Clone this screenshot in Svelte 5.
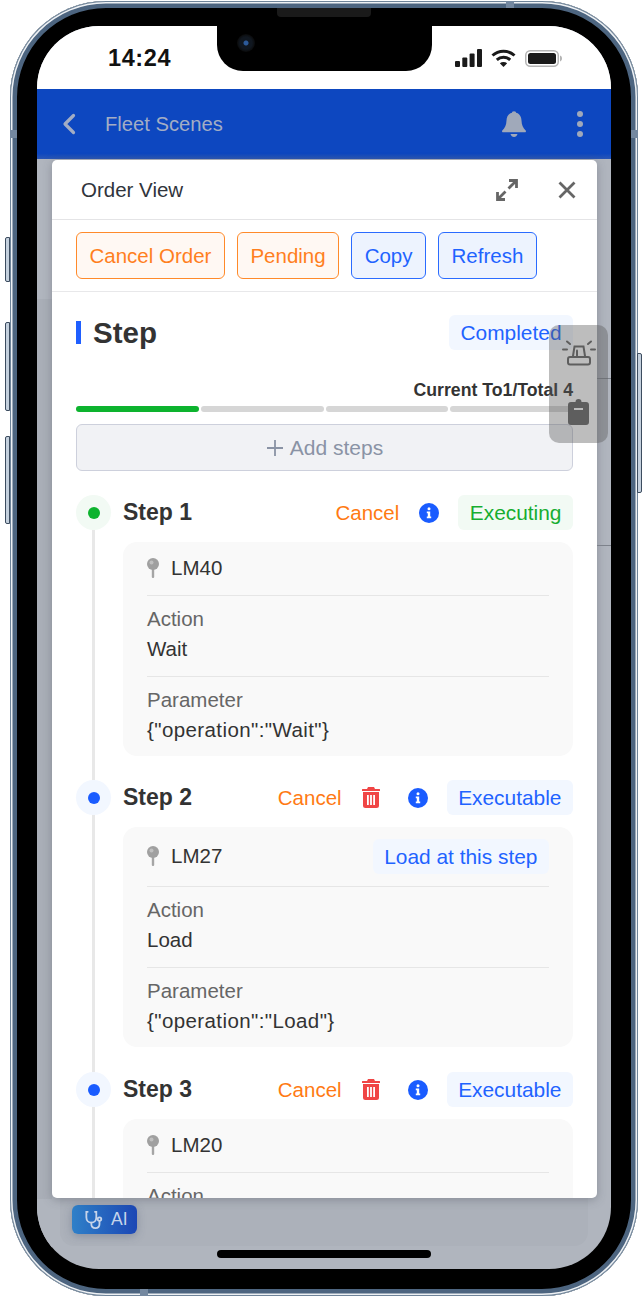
<script>
	const bars = [true, false, false, false];
	// the third step runs past the bottom of the sheet, only its first label shows
	const steps = [
		{ name: "Step 1", active: true, status: "Executing", point: "LM40", action: "Wait", param: '{"operation":"Wait"}' },
		{ name: "Step 2", status: "Executable", trash: true, point: "LM27", load: true, action: "Load", param: '{"operation":"Load"}' },
		{ name: "Step 3", status: "Executable", trash: true, point: "LM20" }
	];
	const marks = ["m-left", "m-right", "m-top", "m-bottom"];
</script>

<div class="phone">
	<span class="side vol-mute"></span>
	<span class="side vol-up"></span>
	<span class="side vol-down"></span>
	<span class="side power"></span>
	{#each marks as m}
		<span class="mark {m}"></span>
	{/each}
	<span class="speaker"></span>

	<div class="screen">
		<div class="notch"><span class="camera"></span></div>

		<div class="status">
			<span class="time">14:24</span>
			<div class="status-icons">
				<svg width="27" height="18" viewBox="0 0 27 18" fill="#1a1a1a">
					<rect x="0" y="12" width="5" height="6" rx="1" />
					<rect x="7.3" y="8.5" width="5" height="9.5" rx="1" />
					<rect x="14.6" y="4.5" width="5" height="13.5" rx="1" />
					<rect x="22" y="0" width="5" height="18" rx="1" />
				</svg>
				<svg width="25" height="18" viewBox="0 0 25 18" fill="none" stroke="#1a1a1a" stroke-width="3">
					<path d="M1.5 6.5C7.6 .8 17.4 .8 23.500 6.500" />
					<path d="M5.800 10.800C9.600 7.400 15.400 7.400 19.200 10.800" />
					<path d="M12.500 18L8.800 14.200C10.900 12.500 14.100 12.500 16.200 14.200Z" fill="#1a1a1a" stroke="none" />
				</svg>
				<svg width="37" height="17" viewBox="0 0 37 17">
					<rect x=".75" y=".75" width="32.500" height="15.500" rx="4.500" fill="none" stroke="#b4b4b4" stroke-width="1.500" />
					<rect x="3" y="3" width="28" height="11" rx="2.500" fill="#1a1a1a" />
					<path d="M35 5.500c1.300.4 2 1.600 2 3s-.7 2.600-2 3z" fill="#b4b4b4" />
				</svg>
			</div>
		</div>

		<header class="appbar">
			<svg class="back" width="16" height="22" viewBox="0 0 16 22" fill="none" stroke="#a3adc4" stroke-width="3.200" stroke-linecap="round" stroke-linejoin="round">
				<path d="M12.500 2.500L4 11l8.500 8.500" />
			</svg>
			<span class="appbar-title">Fleet Scenes</span>
			<svg class="bell" width="24" height="27" viewBox="0 0 24 27" fill="#a0a9ba">
				<circle cx="12" cy="2.500" r="2.300" />
				<path d="M12 1.500c-4.800 0-7.300 3.500-7.500 8-.2 4.600-1.500 7.400-4.200 10 -.6.700-.2 1.700.7 1.700h22c.9 0 1.300-1 .7-1.700-2.700-2.600-4-5.400-4.200-10-.2-4.500-2.700-8-7.500-8z" />
				<path d="M8.500 23h7c-.5 1.800-1.900 3-3.500 3s-3-1.200-3.500-3z" />
			</svg>
			<div class="dots"><i></i><i></i><i></i></div>
		</header>

		<div class="backdrop">
			<section class="sheet">
				<div class="sheet-head">
					<span>Order View</span>
					<svg class="expand" width="22" height="22" viewBox="0 0 22 22" fill="none" stroke="#666" stroke-width="2.800">
						<path d="M12.500 9.500L20 2M13 1.500h7.500V9" />
						<path d="M9.500 12.500L2 20M1.500 13v7.500H9" />
					</svg>
					<svg class="close" width="18" height="18" viewBox="0 0 18 18" fill="none" stroke="#666" stroke-width="2.800">
						<path d="M1.500 1.500l15 15M16.500 1.500l-15 15" />
					</svg>
				</div>

				<div class="actions">
					<button class="btn warn">Cancel Order</button>
					<button class="btn warn">Pending</button>
					<button class="btn info">Copy</button>
					<button class="btn info">Refresh</button>
				</div>

				<div class="body">
					<div class="title-row">
						<h2>Step</h2>
						<span class="tag">Completed</span>
					</div>
					<p class="progress-label">Current To1/Total 4</p>
					<div class="progress">
						{#each bars as done}
							<span class:done></span>
						{/each}
					</div>
					<button class="add">
						<svg width="18" height="18" viewBox="0 0 18 18" stroke="#8a93a5" stroke-width="1.800"><path d="M9 1v16M1 9h16" /></svg>
						Add steps
					</button>

					{#each steps as step}
						<div class="step">
							<div class="rail">
								<span class="node" class:active={step.active}><i></i></span>
								<span class="line"></span>
							</div>
							<div class="main">
								<div class="step-head">
									<h3>{step.name}</h3>
									<span class="cancel">Cancel</span>
									{#if step.trash}
										<svg class="trash" width="18" height="21" viewBox="0 0 18 21" fill="#f04545">
											<path d="M6 0h6l1 2h4.500a.5.5 0 0 1 .5.5V4H0V2.500A.5.5 0 0 1 .5 2H5z" />
											<path fill-rule="evenodd" d="M1 5h16v13.500a2.500 2.500 0 0 1-2.500 2.500h-11A2.500 2.500 0 0 1 1 18.500zM5 8v10h1.800V8zm3.100 0v10h1.800V8zm3.100 0v10H13V8z" />
										</svg>
									{/if}
									<svg class="info-icon" width="20" height="20" viewBox="0 0 20 20">
										<circle cx="10" cy="10" r="10" fill="#1a5cff" />
										<circle cx="10" cy="5.800" r="1.500" fill="#fff" />
										<path d="M7.800 8.500h3.400v5h1v1.700H7.800v-1.700h1v-3.300h-1z" fill="#fff" />
									</svg>
									<span class="tag" class:green={step.active}>{step.status}</span>
								</div>

								<div class="card" class:tall={step.load}>
									<div class="point">
										<svg width="12" height="20" viewBox="0 0 12 20">
											<rect x="4.800" y="9" width="2.400" height="11" rx="1" fill="#a5a5a5" />
											<circle cx="6" cy="6" r="6" fill="#a0a0a0" />
											<circle cx="4.500" cy="4.500" r="2" fill="#c0c0c0" />
										</svg>
										<span>{step.point}</span>
										{#if step.load}
											<span class="tag load">Load at this step</span>
										{/if}
									</div>
									<div class="field">
										<span class="label">Action</span>
										{#if step.action}<div>{step.action}</div>{/if}
									</div>
									{#if step.param}
										<div class="field">
											<span class="label">Parameter</span>
											<div class="param">{step.param}</div>
										</div>
									{/if}
								</div>
							</div>
						</div>
					{/each}
				</div>
			</section>

			<div class="under">
				<button class="ai">
					<svg width="19" height="20" viewBox="0 0 21 21" fill="none" stroke="#c6d4ea" stroke-width="2" stroke-linecap="round">
						<path d="M3 1.500H1.500v6c0 3.500 2.400 6 5.500 6s5.500-2.500 5.500-6v-6H11" />
						<path d="M7 13.500v1.500c0 2.800 1.900 4.500 4.500 4.500s4.500-1.700 4.500-4.500v-3" />
						<circle cx="16" cy="9.500" r="2" />
					</svg>
					AI
				</button>
			</div>
		</div>

		<span class="edge edge-a"></span>
		<span class="edge edge-b"></span>

		<div class="float">
			<svg width="34" height="26" viewBox="0 0 34 26" fill="none" stroke="#5e5e5e" stroke-width="2" stroke-linecap="round">
				<path d="M11 16l1.500-9.500h9L23 16" />
				<path d="M15 10.500v5" />
				<rect x="6" y="17" width="22" height="7.500" rx="2" />
				<path d="M1 9.500h4M29 9.500h4M5 1.500l3 2.500M29 1.500L26 4" />
			</svg>
			<svg width="21" height="26" viewBox="0 0 21 26" fill="#5e5e5e">
				<path fill-rule="evenodd" d="M10.500 0a3 3 0 0 1 3 3h4.500a3 3 0 0 1 3 3v17a3 3 0 0 1-3 3H3a3 3 0 0 1-3-3V6a3 3 0 0 1 3-3h4.500a3 3 0 0 1 3-3zM6 9v2h9V9z" />
			</svg>
		</div>

		<span class="home"></span>
	</div>
</div>

<style>
	:global(body) {
		background: #fff;
		font-family: "Liberation Sans", Arial, sans-serif;
	}
	.phone {
		position: relative;
		box-sizing: border-box;
		width: 628px;
		height: 1295px;
		margin: 1px 0 0 10px;
		padding: 25px 27px 27px 27px;
		border-radius: 96px;
		background: #000;
		box-shadow:
			inset 0 0 0 1px #6f8499,
			inset 0 0 0 2.500px #eef1f4,
			inset 0 0 0 7px #4d6580;
	}
	.side {
		position: absolute;
		width: 5px;
		background: #c4d0dd;
		border: 1px solid #3c4c5f;
		border-radius: 2px 0 0 2px;
		box-sizing: border-box;
	}
	.vol-mute { left: -5px; top: 236px; height: 45px; }
	.vol-up { left: -5px; top: 321px; height: 89px; }
	.vol-down { left: -5px; top: 435px; height: 88px; }
	.power { right: -4px; top: 352px; height: 140px; border-radius: 0 2px 2px 0; }
	.mark {
		position: absolute;
		background: #7488a0;
	}
	.m-left { left: 0; top: 129px; width: 7px; height: 8px; }
	.m-right { right: 0; top: 129px; width: 7px; height: 8px; }
	.m-top { left: 496px; top: 0; width: 8px; height: 7px; }
	.m-bottom { left: 130px; bottom: 0; width: 8px; height: 7px; }
	.speaker {
		position: absolute;
		left: 267px;
		top: 7px;
		width: 94px;
		height: 9px;
		background: #1a1a1a;
		border-radius: 0 0 4px 4px;
	}
	.screen {
		position: relative;
		display: flex;
		flex-direction: column;
		height: 100%;
		overflow: hidden;
		border-radius: 62px;
		background: #b0b5be;
	}
	.notch {
		position: absolute;
		left: 180px;
		top: 0;
		width: 215px;
		height: 45px;
		background: #000;
		border-radius: 0 0 26px 26px;
	}
	.camera {
		position: absolute;
		left: 20px;
		top: 8px;
		width: 18px;
		height: 18px;
		border-radius: 50%;
		background: radial-gradient(circle, #2c5a9a 0 2px, #101720 3px 6px, #0a0a0a 9px);
	}
	.status {
		display: flex;
		align-items: center;
		justify-content: space-between;
		flex: none;
		box-sizing: border-box;
		height: 63px;
		padding: 0 49px 0 71px;
		background: #fff;
	}
	.time {
		font-size: 23.500px;
		font-weight: 700;
		color: #111;
		letter-spacing: 0.600px;
		margin-top: 2px;
	}
	.status-icons {
		display: flex;
		align-items: center;
		gap: 9px;
		margin-top: 1px;
	}
	.appbar {
		display: flex;
		align-items: center;
		flex: none;
		height: 70px;
		padding-left: 24px;
		background: linear-gradient(#0d47c0 92%, #2a56b5);
	}
	.appbar-title {
		margin-left: 28px;
		font-size: 20.200px;
		color: #a3adc4;
	}
	.bell {
		margin-left: auto;
	}
	.dots {
		display: flex;
		flex-direction: column;
		gap: 4px;
		margin: 0 28px 0 51px;
	}
	.dots i {
		width: 6px;
		height: 6px;
		border-radius: 50%;
		background: #a0a9ba;
	}
	.backdrop {
		flex: 1;
		background: linear-gradient(#b0b5be 140px, #a9aeb7 140px, #a9aeb7 1040px, #b0b5be 1040px) no-repeat 0 0 / 15px 100%;
		padding-top: 1px;
	}
	.sheet {
		display: flex;
		flex-direction: column;
		position: relative;
		height: 1038px;
		margin: 0 14px 0 15px;
		overflow: hidden;
		background: #fff;
		border-radius: 5px;
		box-shadow: 0 2px 10px rgba(70, 75, 85, 0.35);
		color: #333;
	}
	.sheet-head {
		display: flex;
		align-items: center;
		flex: none;
		height: 59px;
		padding: 0 21px 0 29px;
		border-bottom: 1px solid #e4e4e6;
		font-size: 20.500px;
		color: #30343c;
	}
	.expand {
		margin-left: auto;
		margin-right: 40px;
	}
	.actions {
		display: flex;
		flex: none;
		gap: 12px;
		padding: 12px 24px;
		border-bottom: 1px solid #e8e8ea;
	}
	.btn {
		height: 47px;
		padding: 0 12.500px;
		border-radius: 6px;
		font: 20.500px "Liberation Sans", Arial, sans-serif;
		white-space: nowrap;
	}
	.warn {
		color: #ff7f1e;
		background: #fff8f3;
		border: 1.500px solid #ff8a2a;
	}
	.info {
		color: #1f63ff;
		background: #edf3fe;
		border: 1.500px solid #2a6bff;
	}
	.body {
		padding: 23px 24px 0;
	}
	.title-row {
		display: flex;
		align-items: center;
		justify-content: space-between;
	}
	h2 {
		margin: 0;
		padding-left: 12px;
		border-left: 5px solid #1f5fff;
		font-size: 29.500px;
		line-height: 23px;
		font-weight: 700;
		color: #333;
	}
	.tag {
		display: inline-flex;
		align-items: center;
		box-sizing: border-box;
		height: 35px;
		padding: 0 11.500px;
		border-radius: 6px;
		background: #f2f7ff;
		color: #1f63ff;
		font-size: 20.900px;
		white-space: nowrap;
	}
	.tag.green {
		background: #f2faf4;
		color: #17ad30;
	}
	.progress-label {
		margin: 28px 0 0;
		text-align: right;
		font-size: 17.700px;
		font-weight: 700;
		line-height: 24px;
		color: #333;
	}
	.progress {
		display: flex;
		gap: 2px;
		margin-top: 4px;
	}
	.progress span {
		flex: 1;
		height: 6px;
		border-radius: 3px;
		background: #d6d6d6;
	}
	.progress .done {
		background: #0db32e;
	}
	.add {
		display: flex;
		align-items: center;
		justify-content: center;
		gap: 6px;
		width: 100%;
		height: 47px;
		margin: 12px 0 24px;
		border: 1.500px solid #cdd0dc;
		border-radius: 6px;
		background: #f1f2f5;
		color: #8a93a5;
		font: 21px "Liberation Sans", Arial, sans-serif;
	}
	.step {
		display: grid;
		grid-template-columns: 47px 1fr;
	}
	.rail {
		display: flex;
		flex-direction: column;
		align-items: center;
		width: 35px;
	}
	.node {
		display: flex;
		align-items: center;
		justify-content: center;
		flex: none;
		width: 35px;
		height: 35px;
		border-radius: 50%;
		background: #f2f7ff;
	}
	.node i {
		width: 12px;
		height: 12px;
		border-radius: 50%;
		background: #1a5cff;
	}
	.node.active {
		background: #f2faf4;
	}
	.node.active i {
		background: #0db32e;
	}
	.line {
		flex: 1;
		width: 3px;
		background: #e8e8e8;
	}
	.main {
		padding-bottom: 24px;
	}
	.step-head {
		display: flex;
		align-items: center;
		gap: 20px;
		height: 35px;
		margin-bottom: 12px;
	}
	.info-icon {
		margin-right: -1px;
	}
	h3 {
		margin: 0 auto 0 0;
		font-size: 23px;
		font-weight: 700;
		color: #333;
	}
	.cancel {
		font-size: 20.500px;
		color: #ff7a13;
	}
	.trash {
		margin-right: 8px;
	}
	.card {
		border-radius: 14px;
		background: #f9f9f9;
		padding: 0 24px;
		font-size: 20.500px;
		color: #333;
	}
	.card.tall {
		margin-bottom: 1px;
	}
	.point {
		display: flex;
		align-items: center;
		gap: 12px;
		padding: 11px 0 13px;
		min-height: 29px;
		line-height: 29px;
	}
	.load {
		position: relative;
		top: 1px;
		margin-left: auto;
	}
	.field {
		border-top: 1px solid #e6e6e6;
		padding: 8px 0 12px;
		line-height: 30px;
	}
	.field:last-child {
		padding-bottom: 11px;
	}
	.label {
		display: block;
		color: #666;
	}
	.param {
		letter-spacing: 0.400px;
	}
	.under {
		height: 48px;
		margin: 0 23px;
		padding: 7px 12px 0;
		box-sizing: border-box;
		background: #acb1ba;
		border-radius: 0 0 14px 14px;
	}
	.ai {
		display: flex;
		align-items: center;
		gap: 7px;
		box-sizing: border-box;
		width: 65px;
		height: 29px;
		padding: 0 0 0 13px;
		border: 0;
		border-radius: 6px;
		background: linear-gradient(90deg, #2f80c8, #1c47b5);
		box-shadow: 0 2px 8px rgba(70, 80, 110, 0.35);
		color: #c6d4ea;
		font: 17.500px "Liberation Sans", Arial, sans-serif;
	}
	.edge {
		position: absolute;
		left: 560px;
		width: 14px;
		height: 1px;
		background: #7d828b;
	}
	.edge-a { top: 352px; }
	.edge-b { top: 519px; }
	.float {
		position: absolute;
		left: 512px;
		top: 299px;
		display: flex;
		flex-direction: column;
		align-items: center;
		gap: 33px;
		box-sizing: border-box;
		width: 59px;
		height: 118px;
		padding-top: 15px;
		border-radius: 10px;
		background: rgba(90, 90, 90, 0.4);
	}
	.home {
		position: absolute;
		left: 180px;
		bottom: 11px;
		width: 214px;
		height: 8px;
		border-radius: 4px;
		background: #000;
	}
</style>
